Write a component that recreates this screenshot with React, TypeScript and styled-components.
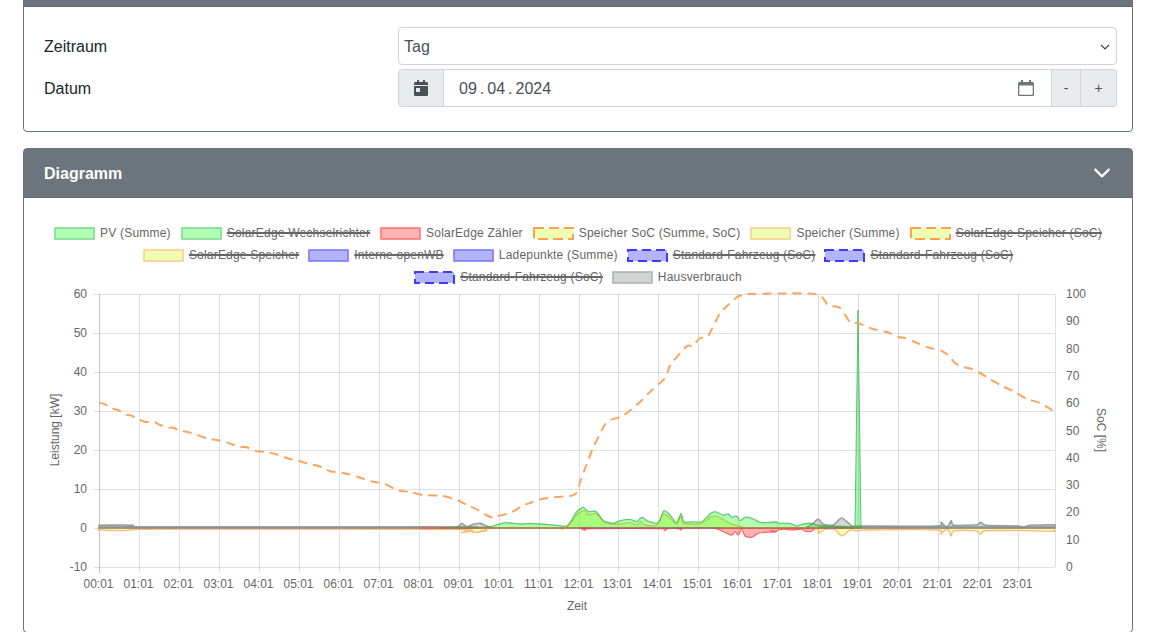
import React from 'react';
import styled, { createGlobalStyle } from 'styled-components';
import { FaCalendarDay } from 'react-icons/fa';

type Point = [number, number];

const Global = createGlobalStyle`
  html, body {
    margin: 0;
    height: 632px;
    overflow: hidden;
    background: #fff;
    font-family: "Liberation Sans", Arial, sans-serif;
  }
`;

// traced curves, in px of the plot; helpers map the crops back to page coords
const crop = (ox: number, oy: number, list: number[][]): Point[] =>
  list.map(([x, y]) => [ox + x / 3, oy + y / 3]);

const smooth = (p: Point[]) => {
  let d = `M${p[0][0].toFixed(1)} ${p[0][1].toFixed(1)}`;
  for (let i = 0; i < p.length - 1; i++) {
    const a = p[Math.max(i - 1, 0)];
    const b = p[i];
    const c = p[i + 1];
    const e = p[Math.min(i + 2, p.length - 1)];
    const c1x = b[0] + (c[0] - a[0]) / 8;
    const c1y = b[1] + (c[1] - a[1]) / 8;
    const c2x = c[0] - (e[0] - b[0]) / 8;
    const c2y = c[1] - (e[1] - b[1]) / 8;
    d += `C${c1x.toFixed(1)} ${c1y.toFixed(1)} ${c2x.toFixed(1)} ${c2y.toFixed(1)} ${c[0].toFixed(1)} ${c[1].toFixed(1)}`;
  }
  return d;
};

const ZERO = 528;

const area = (p: Point[]) =>
  `${smooth(p)}L${p[p.length - 1][0].toFixed(1)} ${ZERO}L${p[0][0].toFixed(1)} ${ZERO}Z`;

const soc: Point[] = [
  ...crop(40, 285, [
    [177, 353], [195, 358], [215, 370], [235, 375], [255, 388], [275, 392], [295, 403], [315, 410],
    [345, 412], [360, 420], [385, 428], [400, 428], [420, 437], [440, 440], [465, 447], [480, 453],
    [505, 461], [530, 465], [555, 470], [575, 478], [600, 485], [625, 488], [645, 497], [685, 502],
    [715, 510], [750, 522], [775, 527], [800, 535], [835, 543], [855, 552], [875, 560], [890, 561],
  ]),
  [348, 474], [358, 477], [370, 481], [385, 484], [397, 490], [410, 492], [423, 495], [443, 496],
  [457, 500], [467, 505], [478, 510], [488, 516], [495, 518], [498, 516], [510, 513], [522, 506],
  [530, 503], [535, 501], [547, 498], [570, 496], [575, 494], [578, 491], [580, 482], [586, 466],
  [593, 448], [603, 428], [608, 421], [620, 417], [627, 413], [640, 402], [652, 390], [665, 378],
  [670, 365], [675, 359], [687, 346], [693, 346], [700, 338], [708, 336], [720, 313], [725, 308],
  [737, 297], [743, 295], [750, 294], [815, 294], [828, 305], [840, 308], [850, 322], [858, 323],
  [863, 325], [873, 329], [887, 332], [898, 337], [905, 338], [915, 342], [927, 347], [942, 351],
  [950, 357], [955, 363], [963, 367], [972, 369], [980, 373], [990, 379], [1002, 386], [1015, 392],
  [1027, 399], [1040, 403], [1055, 412],
];

const pv: Point[] = [
  [440, 528], [460, 527.5],
  ...crop(480, 490, [
    [0, 112], [30, 110], [65, 100], [80, 98], [100, 100], [130, 102], [150, 100], [200, 103], [230, 106],
    [260, 108], [275, 90], [290, 65], [310, 52], [325, 65], [345, 63], [355, 72], [370, 92], [400, 100],
    [420, 92], [450, 88], [470, 95], [480, 85], [490, 83], [500, 92], [530, 100], [540, 90], [552, 62],
    [570, 75], [590, 98], [603, 70], [612, 95], [640, 95], [665, 95], [690, 72], [705, 65], [730, 75],
    [745, 72], [755, 82], [770, 78], [780, 92], [795, 82], [815, 85], [840, 97], [860, 98], [890, 95],
  ]),
  ...crop(770, 490, [
    [0, 97], [15, 96], [30, 100], [60, 100], [80, 108], [100, 102], [125, 100], [140, 105], [170, 108], [240, 110],
  ]),
  [855, 528],
];

const spike = 'M855 528L858 310L861 528Z';

const storage: Point[] = [
  ...crop(90, 490, [
    [25, 120], [100, 122], [145, 118], [300, 117], [1100, 118], [1115, 128], [1135, 120], [1150, 126],
    [1170, 126], [1185, 120],
  ]),
  ...crop(480, 490, [
    [0, 125], [20, 122], [30, 115], [225, 114], [245, 118], [260, 112], [275, 95], [295, 70], [315, 62],
    [325, 75], [345, 70], [360, 80], [375, 97], [415, 102], [450, 98], [470, 105], [483, 95], [495, 105],
    [530, 105], [550, 72], [570, 85], [590, 102], [603, 78], [612, 100], [665, 100], [690, 82], [710, 78],
    [750, 100], [785, 110], [800, 114],
  ]),
  ...crop(770, 490, [
    [130, 114], [145, 130], [165, 118], [195, 118], [215, 138], [240, 120], [255, 122], [270, 122], [290, 120],
    [500, 120], [512, 132], [525, 120], [535, 120], [544, 138], [552, 122], [615, 122], [632, 132], [648, 122],
    [760, 122], [855, 124],
  ]),
];

const houseLeft: Point[] = [
  ...crop(90, 490, [
    [27, 106], [100, 105], [130, 106], [165, 112], [1000, 112], [1100, 110], [1115, 100], [1130, 110], [1150, 103],
    [1170, 100], [1185, 106],
  ]),
  ...crop(480, 490, [[0, 100], [20, 108], [30, 112], [45, 114]]),
];

const houseRight: Point[] = crop(770, 490, [
  [110, 112], [130, 100], [145, 87], [160, 103], [190, 105], [215, 84], [245, 107], [270, 108], [500, 108],
  [512, 97], [525, 108], [535, 108], [544, 92], [552, 106], [620, 104], [632, 97], [648, 106], [745, 108],
  [760, 113], [780, 106], [855, 104],
]);

const meter: Point[] = [
  [420, 528], [578, 528],
  ...crop(480, 490, [
    [300, 114], [315, 121], [330, 116], [545, 116], [553, 122], [562, 116], [595, 116], [604, 120], [612, 115],
    [700, 115], [730, 125], [755, 136], [765, 125], [775, 135], [785, 118], [795, 138], [815, 142], [835, 130],
    [860, 127], [890, 125],
  ]),
  ...crop(770, 490, [
    [0, 122], [15, 127], [25, 120], [45, 118], [65, 120], [95, 118], [105, 124], [125, 124], [135, 116], [150, 114],
  ]),
  [860, 528],
];

const powerTicks = [60, 50, 40, 30, 20, 10, 0, -10];
const socTicks = [100, 90, 80, 70, 60, 50, 40, 30, 20, 10, 0];
const hours = Array.from({ length: 24 }, (_, h) => h);
const hourX = (h: number) => Math.round(99 + h * 39.96) + 0.5;
const powerY = (v: number) => Math.round(ZERO - v * 3.9) + 0.5;

type Swatch = 'pv' | 'meter' | 'socDash' | 'storage' | 'point' | 'carDash' | 'house';

type LegendEntry = { label: string; swatch: Swatch; off?: boolean };

const legend: LegendEntry[][] = [
  [
    { label: 'PV (Summe)', swatch: 'pv' },
    { label: 'SolarEdge Wechselrichter', swatch: 'pv', off: true },
    { label: 'SolarEdge Zähler', swatch: 'meter' },
    { label: 'Speicher SoC (Summe, SoC)', swatch: 'socDash' },
    { label: 'Speicher (Summe)', swatch: 'storage' },
    { label: 'SolarEdge Speicher (SoC)', swatch: 'socDash', off: true },
  ],
  [
    { label: 'SolarEdge Speicher', swatch: 'storage', off: true },
    { label: 'Interne openWB', swatch: 'point', off: true },
    { label: 'Ladepunkte (Summe)', swatch: 'point' },
    { label: 'Standard-Fahrzeug (SoC)', swatch: 'carDash', off: true },
    { label: 'Standard-Fahrzeug (SoC)', swatch: 'carDash', off: true },
  ],
  [
    { label: 'Standard-Fahrzeug (SoC)', swatch: 'carDash', off: true },
    { label: 'Hausverbrauch', swatch: 'house' },
  ],
];

const swatches: Record<Swatch, { fill: string; stroke: string; dash?: string }> = {
  pv: { fill: '#b3ffb3', stroke: '#7bdc90' },
  meter: { fill: '#ffb3b3', stroke: '#fc7676' },
  socDash: { fill: '#eeffb2', stroke: '#ff9f50', dash: '10 5' },
  storage: { fill: '#eeffb2', stroke: '#ffcb8c' },
  point: { fill: '#b3b3ff', stroke: '#7a7afc' },
  carDash: { fill: '#b3b3ff', stroke: '#3c3cff', dash: '9 5' },
  house: { fill: '#d2d4d3', stroke: '#b0b2b1' },
};

const LegendBox = ({ swatch }: { swatch: Swatch }) => {
  const s = swatches[swatch];
  return (
    <LegendSvg width="41" height="13" viewBox="0 0 41 13">
      <rect x="1" y="1" width="39" height="11" fill={s.fill} stroke={s.stroke} strokeWidth={s.dash ? 2 : 1.6} strokeDasharray={s.dash} />
    </LegendSvg>
  );
};

const Chevron = ({ size, color, weight }: { size: number; color: string; weight: number }) => (
  <svg width={size} height={size} viewBox="0 0 16 16" fill="none">
    <path d="M2 5l6 6 6-6" stroke={color} strokeWidth={weight} strokeLinecap="round" strokeLinejoin="round" />
  </svg>
);

const Chart = () => (
  <ChartSvg viewBox="24 288 1108 344">
    {powerTicks.map(v => (
      <g key={v}>
        <GridLine x1={94} x2={1055} y1={powerY(v)} y2={powerY(v)} />
        <AxisText x={87} y={powerY(v) + 3.6} textAnchor="end">{v}</AxisText>
      </g>
    ))}
    {hours.map(h => (
      <g key={h}>
        <GridLine x1={hourX(h)} x2={hourX(h)} y1={294} y2={573} />
        <AxisText x={hourX(h) - 1} y={588} textAnchor="middle">{`${String(h).padStart(2, '0')}:01`}</AxisText>
      </g>
    ))}
    <GridLine x1={99.5} x2={99.5} y1={294} y2={573} />
    <GridLine x1={1055.5} x2={1055.5} y1={294} y2={567} />
    {socTicks.map(v => (
      <AxisText key={v} x={1066} y={Math.round(567 - v * 2.73) + 3.6}>{v}</AxisText>
    ))}
    <AxisText x={577} y={610} textAnchor="middle">Zeit</AxisText>
    <AxisText transform="translate(59 430) rotate(-90)" textAnchor="middle">Leistung [kW]</AxisText>
    <AxisText transform="translate(1097 430) rotate(90)" textAnchor="middle">SoC [%]</AxisText>

    <path d={area(houseLeft)} fill="rgba(120,125,122,.3)" stroke="#9a9c9b" strokeWidth={1.6} />
    <path d={area(houseRight)} fill="rgba(120,125,122,.3)" stroke="#9a9c9b" strokeWidth={1.6} />
    <path d={area(storage)} fill="rgba(204,255,0,.3)" stroke="rgba(255,159,80,.75)" strokeWidth={1.3} />
    <path d="M99 527.5H478M818 527.5H1055" fill="none" stroke="#8f918f" strokeWidth={2.6} />
    <path d={area(pv)} fill="rgba(0,255,0,.3)" stroke="rgba(40,175,70,.65)" strokeWidth={1.3} />
    <path d={spike} fill="rgba(0,220,40,.35)" stroke="rgba(40,175,70,.7)" strokeWidth={1} />
    <path d={area(meter)} fill="rgba(255,0,0,.3)" stroke="rgba(255,70,70,.85)" strokeWidth={1.1} />
    <path d="M578 528H720" fill="none" stroke="rgba(80,60,255,.35)" strokeWidth={1} />
    <path d={smooth(soc)} fill="none" stroke="#fda45f" strokeWidth={2} strokeDasharray="9 6" />
  </ChartSvg>
);

export default function App() {
  return (
    <>
      <Global />
      <Page>
        <Card>
          <CardHeader />
          <FormBody>
            <Label>Zeitraum</Label>
            <SelectBox>
              Tag
              <Chevron size={10} color="#343a40" weight={2} />
            </SelectBox>
            <Label>Datum</Label>
            <InputGroup>
              <Addon>
                <FaCalendarDay size={16} color="#495057" />
              </Addon>
              <DateField>
                <span>09</span>
                <DateDot>.</DateDot>
                <span>04</span>
                <DateDot>.</DateDot>
                <span>2024</span>
                <PickerIcon width="16" height="16" viewBox="0 0 16 16">
                  <path d="M3 0h2v2h6V0h2v2h1.5A1.5 1.5 0 0 1 16 3.5v11a1.5 1.5 0 0 1-1.5 1.5h-13A1.5 1.5 0 0 1 0 14.5v-11A1.5 1.5 0 0 1 1.5 2H3V0zM1.3 5.5v8.7c0 .3.2.5.5.5h12.4c.3 0 .5-.2.5-.5V5.5H1.3z" fill="#70757a" />
                </PickerIcon>
              </DateField>
              <StepButton>-</StepButton>
              <StepButton $last>+</StepButton>
            </InputGroup>
          </FormBody>
        </Card>
        <Card>
          <CardHeader>
            <CardTitle>Diagramm</CardTitle>
            <Chevron size={18} color="#fff" weight={1.9} />
          </CardHeader>
          <LegendBlock>
            {legend.map((row, i) => (
              <LegendRow key={i} $gap={i === 0 ? 10 : 9}>
                {row.map((entry, j) => (
                  <LegendItem key={j}>
                    <LegendBox swatch={entry.swatch} />
                    <LegendLabel $off={entry.off}>{entry.label}</LegendLabel>
                  </LegendItem>
                ))}
              </LegendRow>
            ))}
          </LegendBlock>
          <Chart />
        </Card>
      </Page>
    </>
  );
}

const Page = styled.div`
  margin-top: -43px;
  padding: 0 23px;
`;

const Card = styled.section`
  border: 1px solid #6c757d;
  border-radius: 4px;
  margin-bottom: 16px;
  background: #fff;
`;

const CardHeader = styled.header`
  height: 48px;
  background: #6c757d;
  border-bottom: 1px solid #60686f;
  display: flex;
  align-items: center;
  justify-content: space-between;
  padding: 0 21px 0 20px;
`;

const CardTitle = styled.h2`
  margin: 0;
  padding-top: 2px;
  color: #fff;
  font-size: 16px;
  font-weight: 700;
`;

const FormBody = styled.div`
  display: grid;
  grid-template-columns: 354px 1fr;
  row-gap: 4px;
  align-items: center;
  padding: 20px 15px 24px 20px;
`;

const Label = styled.label`
  padding-top: 2px;
  font-size: 16px;
  color: #212529;
`;

const SelectBox = styled.div`
  height: 38px;
  box-sizing: border-box;
  border: 1px solid #ced4da;
  border-radius: 4px;
  display: flex;
  align-items: center;
  justify-content: space-between;
  padding: 2px 6px 0 5px;
  font-size: 16px;
  color: #495057;
`;

const InputGroup = styled.div`
  display: flex;
  height: 38px;
`;

const Addon = styled.div`
  width: 46px;
  box-sizing: border-box;
  display: flex;
  align-items: center;
  justify-content: center;
  background: #e9ecef;
  border: 1px solid #ced4da;
  border-radius: 4px 0 0 4px;
`;

const DateField = styled.div`
  flex: 1;
  display: flex;
  align-items: center;
  padding: 0 17px 0 15px;
  border: solid #ced4da;
  border-width: 1px 0;
  font-size: 16px;
  line-height: 20px;
  color: #495057;

  span {
    padding-top: 2px;
  }
`;

const DateDot = styled.span`
  margin: 0 3px;
`;

const PickerIcon = styled.svg`
  margin-left: auto;
  margin-top: -1px;
`;

const StepButton = styled.button<{ $last?: boolean }>`
  width: ${p => (p.$last ? 36 : 30)}px;
  padding: 0;
  background: #e9ecef;
  border: 1px solid #ced4da;
  border-left-width: ${p => (p.$last ? 0 : 1)}px;
  border-radius: ${p => (p.$last ? '0 4px 4px 0' : '0')};
  font-family: inherit;
  font-size: 14px;
  color: #495057;
`;

const LegendBlock = styled.div`
  padding-top: 24px;
`;

const LegendRow = styled.div<{ $gap: number }>`
  height: 22px;
  display: flex;
  justify-content: center;
  gap: ${p => p.$gap}px;
`;

const LegendItem = styled.div`
  display: flex;
  align-items: flex-start;
  gap: 5px;
`;

const LegendSvg = styled.svg`
  margin-top: 5px;
  flex: none;
`;

const LegendLabel = styled.span<{ $off?: boolean }>`
  font-size: 12px;
  line-height: 22px;
  letter-spacing: 0.2px;
  color: #666;
  text-decoration: ${p => (p.$off ? 'line-through' : 'none')};
  text-decoration-thickness: 2px;
`;

const ChartSvg = styled.svg`
  display: block;
  width: 1108px;
  height: 344px;
`;

const GridLine = styled.line`
  stroke: rgba(0, 0, 0, 0.12);
  stroke-width: 1;
`;

const AxisText = styled.text`
  font-family: "Liberation Sans", Arial, sans-serif;
  font-size: 12px;
  fill: #666;
`;
